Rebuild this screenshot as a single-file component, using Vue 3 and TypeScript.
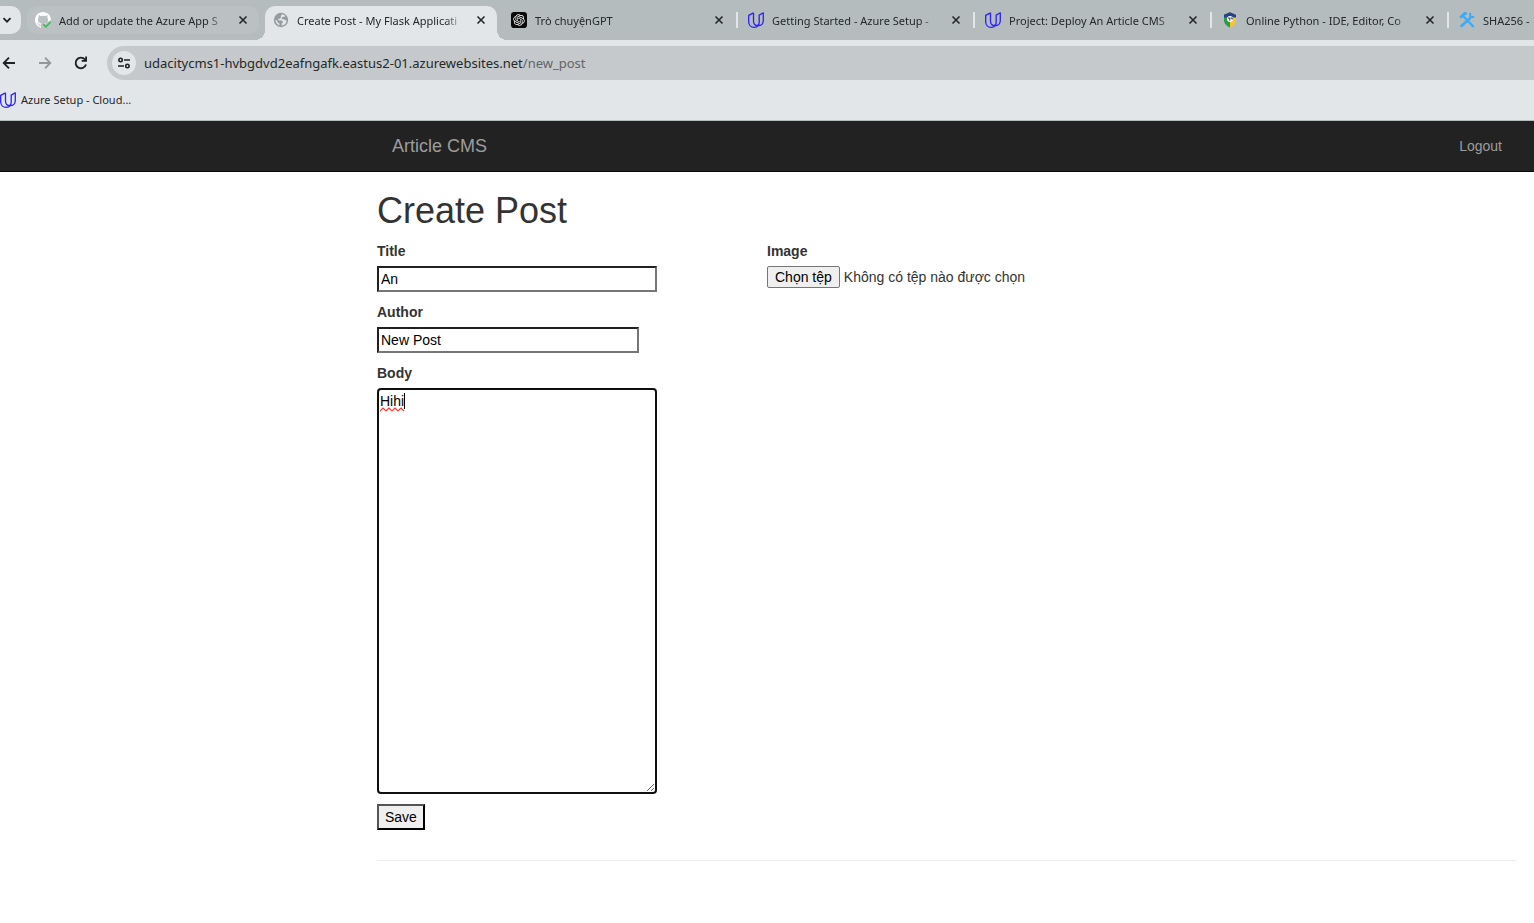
<script setup lang="ts">
import { ref } from 'vue'

type Icon = 'github' | 'globe' | 'gpt' | 'udacity' | 'python' | 'tools'

interface Tab {
  icon: Icon
  title: string
  state?: 'active' | 'hover'
  divider?: boolean
}

const tabs: Tab[] = [
  { icon: 'github', title: 'Add or update the Azure App S', state: 'hover' },
  { icon: 'globe', title: 'Create Post - My Flask Applicati', state: 'active' },
  { icon: 'gpt', title: 'Trò chuyệnGPT' },
  { icon: 'udacity', title: 'Getting Started - Azure Setup -', divider: true },
  { icon: 'udacity', title: 'Project: Deploy An Article CMS', divider: true },
  { icon: 'python', title: 'Online Python - IDE, Editor, Co', divider: true },
  { icon: 'tools', title: 'SHA256 -', divider: true },
]

const title = ref('An')
const author = ref('New Post')
const body = ref('Hihi')
const fileName = ref('Không có tệp nào được chọn')

function onFile(event: Event) {
  const file = (event.target as HTMLInputElement).files?.[0]
  if (file) fileName.value = file.name
}
</script>

<template>
  <div class="browser">
    <div class="tabstrip">
      <button class="tab-search" type="button" aria-label="Search tabs">
        <svg width="10" height="10" viewBox="0 0 10 10"><path d="M1.500 3.200 5 6.700l3.500-3.500" fill="none" stroke="#1f2224" stroke-width="1.800" /></svg>
      </button>
      <div v-for="tab in tabs" :key="tab.title" class="tab" :class="[tab.state, { divider: tab.divider }]">
        <svg v-if="tab.icon === 'github'" class="favicon" viewBox="0 0 16 16">
          <path fill="#fff" d="M8 0C3.58 0 0 3.58 0 8c0 3.54 2.29 6.53 5.47 7.59.4.07.55-.17.55-.38 0-.19-.01-.82-.01-1.49-2.01.37-2.53-.49-2.69-.94-.09-.23-.48-.94-.82-1.13-.28-.15-.68-.52-.01-.53.63-.01 1.08.58 1.23.82.72 1.21 1.87.87 2.33.66.07-.52.28-.87.51-1.07-1.78-.2-3.64-.89-3.64-3.95 0-.87.31-1.59.82-2.15-.08-.2-.36-1.02.08-2.12 0 0 .67-.21 2.2.82.64-.18 1.32-.27 2-.27.68 0 1.36.09 2 .27 1.530-1.04 2.2-.82 2.2-.82.44 1.1.16 1.92.08 2.12.51.56.82 1.27.82 2.150 0 3.070-1.870 3.750-3.650 3.950L8.500 13 15 8.500 16 8c0-4.420-3.580-8-8-8z" />
          <path d="M8.300 12.300l2.600 2.600 4.600-5" fill="none" stroke="#bcc0c2" stroke-width="3.400" />
          <path d="M8.300 12.300l2.600 2.600 4.600-5" fill="none" stroke="#2fc052" stroke-width="1.500" />
        </svg>
        <svg v-else-if="tab.icon === 'globe'" class="favicon" viewBox="0 0 16 16">
          <circle cx="8" cy="8" r="7.200" fill="#969b9f" />
          <path fill="#e2e6e9" d="M9 2.300 7.700 4.200 8 5.600 6.800 6.800H4.800l1 1.600h3.200l1 1.800-1.200 1.100-.2 2.300c2.800-.2 5-2.400 5.100-5.100l-1.500-.2-1.500-1.300-1.600.2-.6-1.200 1.500-1.200 1.600.1.400-1.300C11.300 3 10.200 2.400 9 2.300zM2.400 7.800c0 2.700 1.700 5 4.200 5.600l-.2-1.900-1.900-1.300-.4-1.700z" />
        </svg>
        <svg v-else-if="tab.icon === 'gpt'" class="favicon" viewBox="0 0 36 36">
          <rect width="36" height="36" rx="7" fill="#0a0a0a" />
          <path transform="translate(5 5) scale(1.083)" fill="#fff" d="M22.2819 9.8211a5.9847 5.9847 0 0 0-.5157-4.9108 6.0462 6.0462 0 0 0-6.5098-2.9A6.0651 6.0651 0 0 0 4.9807 4.1818a5.9847 5.9847 0 0 0-3.9977 2.9 6.0462 6.0462 0 0 0 .7427 7.0966 5.98 5.98 0 0 0 .511 4.9107 6.051 6.051 0 0 0 6.5146 2.9001A5.9847 5.9847 0 0 0 13.2599 24a6.0557 6.0557 0 0 0 5.7718-4.2058 5.9894 5.9894 0 0 0 3.9977-2.9001 6.0557 6.0557 0 0 0-.7475-7.0729zm-9.022 12.6081a4.4755 4.4755 0 0 1-2.8764-1.0408l.1419-.0804 4.7783-2.7582a.7948.7948 0 0 0 .3927-.6813v-6.7369l2.02 1.1686a.071.071 0 0 1 .038.052v5.5826a4.504 4.504 0 0 1-4.4945 4.4944zm-9.6607-4.1254a4.4708 4.4708 0 0 1-.5346-3.0137l.142.0852 4.783 2.7582a.7712.7712 0 0 0 .7806 0l5.8428-3.3685v2.3324a.0804.0804 0 0 1-.0332.0615L9.74 19.9502a4.4992 4.4992 0 0 1-6.1408-1.6464zM2.3408 7.8956a4.485 4.485 0 0 1 2.3655-1.9728V11.6a.7664.7664 0 0 0 .3879.6765l5.8144 3.3543-2.0201 1.1685a.0757.0757 0 0 1-.071 0l-4.8303-2.7865A4.504 4.504 0 0 1 2.3408 7.872zm16.5963 3.8558L13.1038 8.364 15.1192 7.2a.0757.0757 0 0 1 .071 0l4.8303 2.7913a4.4944 4.4944 0 0 1-.6765 8.1042v-5.6772a.79.79 0 0 0-.407-.667zm2.0107-3.0231l-.142-.0852-4.7735-2.7818a.7759.7759 0 0 0-.7854 0L9.409 9.2297V6.8974a.0662.0662 0 0 1 .0284-.0615l4.8303-2.7866a4.4992 4.4992 0 0 1 6.6802 4.66zM8.3065 12.863l-2.02-1.1638a.0804.0804 0 0 1-.038-.0567V6.0742a4.4992 4.4992 0 0 1 7.3757-3.4537l-.142.0805L8.704 5.459a.7948.7948 0 0 0-.3927.6813zm1.0976-2.3654l2.602-1.4998 2.6069 1.4998v2.9994l-2.5974 1.4997-2.6067-1.4997Z" />
        </svg>
        <svg v-else-if="tab.icon === 'udacity'" class="favicon" viewBox="0 0 16 16">
          <path d="M5.500.8.7 3.300v6.400c0 3.300 2.300 5.600 5.500 5.600 2 0 3.300-.6 4.300-1.700M5.500.8v8.400c0 2.500 1.700 4.400 4.600 4.400 3.200 0 5.200-2 5.200-5.200V.8l-4.100 2.300v7.400c0 1.600-.5 2.600-1.700 3.100" fill="none" stroke="#2a1fff" stroke-width="1.300" stroke-linejoin="round" />
        </svg>
        <svg v-else-if="tab.icon === 'python'" class="favicon" viewBox="0 0 16 16">
          <path d="M8 .3 2 2.800v5.200c0 3.500 2.500 6 6 7.800z" fill="#2c9b46" />
          <path d="M8 .3l6 2.500v5.200c0 3.500-2.500 6-6 7.800z" fill="#f6c62d" />
          <path d="M8 .3 2 2.800v2.700h12V2.800z" fill="#25418e" />
          <circle cx="8" cy="7" r="3" fill="#fff" />
          <path d="M6 6h1.800v2.600M8.600 6h1.600v1.500" fill="none" stroke="#333" stroke-width="1" />
        </svg>
        <svg v-else class="favicon" viewBox="0 0 16 16" fill="none" stroke="#3fa9f5">
          <path d="M5 5l9 9.300" stroke-width="2.300" stroke-linecap="round" />
          <path d="M1.200 5.800 5.700 1.500l2.200.2" stroke-width="2.800" />
          <path d="M11 6.200 2.500 14" stroke-width="2.600" stroke-linecap="round" />
          <path d="M11.200 1v3.900h4" stroke-width="2" />
        </svg>
        <span class="tab-title">{{ tab.title }}</span>
        <button class="tab-close" type="button" aria-label="Close tab">
          <svg width="10" height="10" viewBox="0 0 10 10"><path d="M1.500 1.500l7 7M8.500 1.500l-7 7" stroke="#24282a" stroke-width="1.600" /></svg>
        </button>
      </div>
    </div>

    <div class="toolbar">
      <button class="tool back" type="button" aria-label="Back">
        <svg width="16" height="16" viewBox="0 0 16 16"><path d="M14 8H3M8 2.700 2.700 8 8 13.300" fill="none" stroke="#1f2123" stroke-width="1.800" /></svg>
      </button>
      <button class="tool" type="button" aria-label="Forward">
        <svg width="16" height="16" viewBox="0 0 16 16"><path d="M2 8h11M8 2.700 13.300 8 8 13.300" fill="none" stroke="#93979a" stroke-width="1.800" /></svg>
      </button>
      <button class="tool" type="button" aria-label="Reload">
        <svg width="16" height="16" viewBox="0 0 16 16"><path d="M13 9.500A5.300 5.300 0 1 1 12 4.500l1 1" fill="none" stroke="#1f2123" stroke-width="1.900" /><path d="M14 1.500v5.300H8.700V5h3.500V1.500z" fill="#1f2123" /></svg>
      </button>
      <div class="omnibox">
        <button class="site-info" type="button" aria-label="Site information">
          <svg width="14" height="14" viewBox="0 0 14 14" fill="none" stroke="#1f2123" stroke-width="1.600">
            <circle cx="3.600" cy="4" r="1.700" /><path d="M7 4h6M1 10h6" /><circle cx="10.400" cy="10" r="1.700" />
          </svg>
        </button>
        <span class="url">udacitycms1-hvbgdvd2eafngafk.eastus2-01.azurewebsites.net<span class="path">/new_post</span></span>
      </div>
    </div>

    <div class="bookmarks">
      <a class="bookmark" href="#">
        <svg class="favicon" viewBox="0 0 16 16">
          <path d="M5.500.8.7 3.300v6.400c0 3.300 2.300 5.600 5.500 5.600 2 0 3.300-.6 4.300-1.700M5.500.8v8.400c0 2.500 1.700 4.400 4.600 4.400 3.200 0 5.200-2 5.200-5.200V.8l-4.100 2.300v7.400c0 1.600-.5 2.600-1.700 3.100" fill="none" stroke="#2a1fff" stroke-width="1.300" stroke-linejoin="round" />
        </svg>
        <span>Azure Setup - Cloud...</span>
      </a>
    </div>
  </div>

  <nav class="navbar">
    <div class="container navbar-inner">
      <a class="brand" href="#">Article CMS</a>
      <a class="logout" href="#">Logout</a>
    </div>
  </nav>

  <main class="container">
    <h1>Create Post</h1>
    <form @submit.prevent>
      <div class="row">
        <div class="column">
          <div class="field">
            <label for="title">Title</label>
            <input id="title" v-model="title" class="text wide" type="text" />
          </div>
          <div class="field">
            <label for="author">Author</label>
            <input id="author" v-model="author" class="text" type="text" />
          </div>
          <div class="field">
            <label for="body">Body</label>
            <div class="editor">
              <textarea id="body" v-model="body" spellcheck="false"></textarea>
              <span class="caret"></span>
              <svg class="squiggle" width="25" height="5" viewBox="0 0 25 5"><path d="M0 4 3 1l3 3 3-3 3 3 3-3 3 3 3-3 3 3" fill="none" stroke="#f33" stroke-width="1.200" /></svg>
            </div>
          </div>
          <button class="save" type="submit">Save</button>
        </div>
        <div class="column">
          <label for="image">Image</label>
          <div class="file">
            <input id="image" class="file-input" type="file" @change="onFile" />
            <label class="file-button" for="image">Chọn tệp</label>
            <span>{{ fileName }}</span>
          </div>
        </div>
      </div>
    </form>
    <hr />
  </main>
</template>

<style>
body {
  margin: 0;
  background: #fff;
  color: #333;
  font: 14px/20px "Liberation Sans", Arial, sans-serif;
  overflow-x: hidden;
}
</style>

<style scoped>
*,
*::before,
*::after {
  box-sizing: border-box;
}

button {
  border: 0;
  padding: 0;
  background: none;
  font: inherit;
}

a {
  text-decoration: none;
}

.browser {
  background: #e2e6e9;
  border-bottom: 1px solid #b5bcbe;
  color: #24282a;
  font-family: "Noto Sans", "Open Sans", sans-serif;
  font-size: 11px;
  overflow: hidden;
}

.tabstrip {
  display: flex;
  height: 40px;
  padding-top: 6px;
  background: #b4bcbe;
}

.tab-search {
  display: flex;
  flex: none;
  align-items: center;
  width: 21px;
  height: 28px;
  margin-right: 6px;
  padding-left: 2px;
  border-radius: 0 10px 10px 0;
  background: #e2e6e9;
}

.tab {
  position: relative;
  display: flex;
  flex: none;
  align-items: center;
  gap: 8px;
  width: 232px;
  height: 28px;
  margin-right: 5px;
  padding: 0 8px;
}

.tab.hover {
  margin-right: 6px;
  border-radius: 10px;
  background: #bbc0c2;
}

.tab.active {
  height: 34px;
  margin-right: 6px;
  padding-bottom: 6px;
  border-radius: 10px 10px 0 0;
  background: #e2e6e9;
}

.tab.active::before,
.tab.active::after {
  content: "";
  position: absolute;
  bottom: 0;
  width: 10px;
  height: 10px;
}

.tab.active::before {
  right: 100%;
  background: radial-gradient(circle at 0 0, transparent 10px, #e2e6e9 10px);
}

.tab.active::after {
  left: 100%;
  background: radial-gradient(circle at 100% 0, transparent 10px, #e2e6e9 10px);
}

.tab.divider::before {
  content: "";
  position: absolute;
  top: 6px;
  left: -4px;
  width: 2px;
  height: 16px;
  background: #e2e6e9;
}

.favicon {
  flex: none;
  width: 16px;
  height: 16px;
}

.tab-title {
  flex: 1;
  padding-top: 2px;
  overflow: hidden;
  white-space: nowrap;
  mask-image: linear-gradient(to left, transparent, #000 20px);
}

.tab-close {
  display: flex;
  flex: none;
  align-items: center;
  justify-content: center;
  width: 16px;
  height: 16px;
}

.toolbar {
  display: flex;
  align-items: center;
  padding: 6px 0;
}

.tool {
  display: flex;
  flex: none;
  align-items: center;
  justify-content: center;
  width: 36px;
  height: 34px;
}

.tool.back {
  width: 18px;
  margin-right: 9px;
}

.omnibox {
  display: flex;
  flex: 1;
  align-items: center;
  gap: 8px;
  height: 34px;
  margin-left: 8px;
  padding-left: 5px;
  border-radius: 17px 0 0 17px;
  background: #c6c9cb;
  font-size: 13px;
}

.site-info {
  display: flex;
  align-items: center;
  justify-content: center;
  width: 24px;
  height: 24px;
  border-radius: 50%;
  background: #e2e6e9;
}

.path {
  color: #5f6569;
}

.bookmarks {
  display: flex;
  height: 34px;
  padding-bottom: 6px;
}

.bookmark {
  display: flex;
  align-items: center;
  gap: 5px;
  color: inherit;
}

.container {
  max-width: 1170px;
  margin: 0 2px 0 auto;
  padding: 0 15px;
}

.navbar {
  border-bottom: 1px solid #080808;
  background: #222;
}

.navbar-inner {
  display: flex;
  align-items: center;
  justify-content: space-between;
  height: 50px;
}

.navbar a {
  padding: 0 15px;
  color: #9d9d9d;
}

.brand {
  font-size: 18px;
}

h1 {
  margin: 20px 0 12px;
  color: #333;
  font-size: 36px;
  font-weight: 500;
  line-height: 37px;
}

.row {
  display: grid;
  grid-template-columns: repeat(3, 1fr);
  column-gap: 30px;
}

.field {
  margin-bottom: 10px;
}

label {
  display: block;
  margin-bottom: 5px;
  font-weight: 700;
}

.text {
  display: block;
  width: 262px;
  height: 26px;
  padding: 1px 2px;
  border: 2px solid;
  border-color: #212121 #767676 #767676 #212121;
  border-radius: 0;
  background: #fff;
  color: #000;
  font: inherit;
  outline: 0;
}

.text.wide {
  width: 280px;
}

.editor {
  position: relative;
}

textarea {
  display: block;
  width: 280px;
  height: 406px;
  padding: 1px;
  border: 2px solid #101010;
  border-radius: 4px;
  background: #fff;
  color: #000;
  font: inherit;
  outline: 0;
}

.caret {
  position: absolute;
  top: 5px;
  left: 27px;
  width: 1px;
  height: 16px;
  background: #000;
}

.squiggle {
  position: absolute;
  top: 19px;
  left: 3px;
}

.save {
  display: block;
  height: 26px;
  padding: 0 6px;
  border: 2px solid;
  border-color: #555 #000 #000 #555;
  background: #efefef;
  color: #000;
}

.file {
  position: relative;
  display: flex;
  align-items: center;
  gap: 4px;
  height: 22px;
  white-space: nowrap;
}

.file-input {
  position: absolute;
  width: 1px;
  height: 1px;
  opacity: 0;
}

.file-button {
  height: 22px;
  margin: 0;
  padding: 0 7px;
  border: 1px solid #767676;
  border-radius: 2px;
  background: #efefef;
  color: #000;
  font-weight: 400;
}

hr {
  margin: 30px 0 20px;
  border: 0;
  border-top: 1px solid #eee;
}
</style>
